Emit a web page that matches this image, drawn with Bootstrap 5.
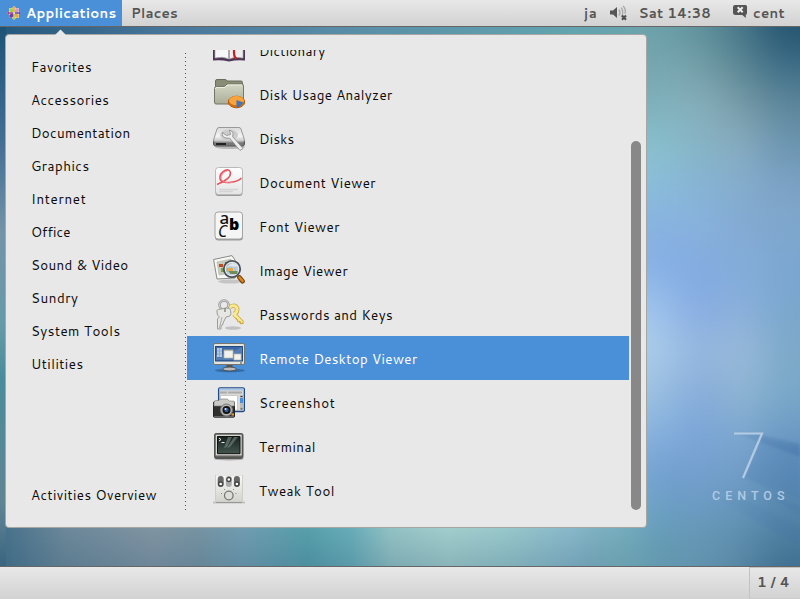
<!DOCTYPE html>
<html lang="en">
<head>
<meta charset="utf-8">
<meta name="viewport" content="width=device-width, initial-scale=1">
<title>Desktop</title>
<link href="https://cdn.jsdelivr.net/npm/bootstrap@5.3.0/dist/css/bootstrap.min.css" rel="stylesheet">
<style>
body{width:800px;height:599px;overflow:hidden;font-family:Cantarell,"Noto Sans","Open Sans",sans-serif;font-size:13.4px;line-height:20px;color:#0c0c0c;background:#5b8ba8}
.wallpaper{position:absolute;left:0;top:0;z-index:-1}
.panel{background:linear-gradient(#e8e8e8,#d2d2d2);color:#555;font-weight:700;flex:none}
.panel-top{height:27px;border-bottom:1px solid #666}
.panel-bottom{height:33px;border-top:1px solid #666}
.app-button{width:122px;height:26px;background:#4a90d9;color:#fff;padding-left:7px}
.app-button svg{margin-right:5px}
.places{padding-left:9px}
.tray{padding-right:15px}
.desk{padding:7px 0 0 5px}
.menu-box{position:relative;width:642px;height:494px;background:#e8e8e8;border:1px solid #a6a6a2;border-radius:4px;padding:15px 5px 15px 0}
.pointer{position:absolute;left:47px;top:-7px}
.categories{width:179px;padding:1px 0 0 25px}
.categories .entry{height:33px;line-height:31px;white-space:nowrap}
.dots{width:1px;margin:3px 1px 1px 0;background:repeating-linear-gradient(#505050 0 1px,transparent 1px 4px)}
.apps{width:442px;overflow:hidden}
.app-row{height:44px;flex:none;padding-left:26px;white-space:nowrap;line-height:46px}
.app-row svg{margin:2px 14px 0 0;flex:none}
.app-row.chosen{background:#4a90d9;color:#fff}
.app-label{display:block;height:44px}
.thumb-track{width:10px;margin:91px 0 2px 2px;border-radius:5px;background:#888}
.brand{position:absolute;left:711px;top:420px}
.workspace{width:51px;height:32px;border:1px solid #c2c2c2;border-right:0;border-bottom-color:#ccc;padding-left:7px;line-height:28px}
</style>
</head>
<body class="d-flex flex-column">
<svg class="wallpaper" width="800" height="599">
<defs>
<linearGradient id="wt"><stop offset="0" stop-color="#24587c"/><stop offset=".2" stop-color="#47759a"/><stop offset=".45" stop-color="#5a8fa8"/><stop offset=".72" stop-color="#62a4af"/><stop offset="1" stop-color="#6ca1ab"/></linearGradient>
<linearGradient id="wl" x2="0" y2="1"><stop offset="0" stop-color="#1d5277"/><stop offset=".05" stop-color="#255a7e"/><stop offset=".22" stop-color="#456f95"/><stop offset=".38" stop-color="#7493a8"/><stop offset=".55" stop-color="#669ba9"/><stop offset=".65" stop-color="#4a8c9c"/><stop offset=".88" stop-color="#608493"/><stop offset="1" stop-color="#3e6984"/></linearGradient>
<linearGradient id="wb" gradientUnits="userSpaceOnUse" x1="0" x2="640" y1="0" y2="0"><stop offset="0" stop-color="#44708a"/><stop offset=".1" stop-color="#6b8799"/><stop offset=".24" stop-color="#8094a2"/><stop offset=".31" stop-color="#7693a2"/><stop offset=".38" stop-color="#709cb0"/><stop offset=".48" stop-color="#569eaa"/><stop offset=".55" stop-color="#68acb8"/><stop offset=".61" stop-color="#92c1c3"/><stop offset=".7" stop-color="#a2cdcc"/><stop offset=".79" stop-color="#98c7cb"/><stop offset=".89" stop-color="#88b8c9"/><stop offset="1" stop-color="#71a8b8"/></linearGradient>
<linearGradient id="shade" x2="0" y2="1"><stop offset="0" stop-color="#245070" stop-opacity="0"/><stop offset="1" stop-color="#245070" stop-opacity=".2"/></linearGradient>
<linearGradient id="ray"><stop offset="0" stop-color="#3f6fa5" stop-opacity=".1"/><stop offset="1" stop-color="#3f6fa5" stop-opacity=".45"/></linearGradient>
<filter id="soft" x="-10%" y="-10%" width="120%" height="120%" color-interpolation-filters="sRGB"><feGaussianBlur stdDeviation="21"/></filter>
<filter id="soft1"><feGaussianBlur stdDeviation="1.5"/></filter>
<linearGradient id="fade" gradientUnits="userSpaceOnUse" x1="580" x2="645" y1="0" y2="0"><stop offset="0" stop-color="#000"/><stop offset="1" stop-color="#fff"/></linearGradient>
<mask id="rightside" maskUnits="userSpaceOnUse" x="0" y="0" width="800" height="599"><rect x="580" width="220" height="599" fill="url(#fade)"/></mask>
</defs>
<rect width="800" height="40" fill="url(#wt)"/>
<rect y="500" width="660" height="99" fill="url(#wb)"/>
<rect y="27" width="6" height="540" fill="url(#wl)"/>
<rect y="528" width="660" height="39" fill="url(#shade)"/>
<g mask="url(#rightside)"><g id="mesh" filter="url(#soft)"></g></g>
<path d="M735 433L762 435L800 444V457L762 443Z" fill="url(#ray)" filter="url(#soft1)"/>
<path d="M762 438L800 450V500L744 478Z" fill="#4776ad" opacity=".2" filter="url(#soft1)"/>
<path d="M720 500L745 499L800 528V546ZM765 492L800 506V516Z" fill="url(#ray)" opacity=".4" filter="url(#soft1)"/>
</svg>

<nav class="panel panel-top d-flex align-items-center justify-content-between">
<div class="d-flex align-items-center">
<div class="app-button d-flex align-items-center">
<svg width="14" height="14" viewBox="0 0 14 14"><path d="M7 0l2 2h3v3l2 2-2 2v3H9l-2 2-2-2H2V9L0 7l2-2V2h3z" fill="#e9e2ef"/><path d="M2.3 2.3h3.2L6.5 4v2.5H4L2.3 5z" fill="#a8cf4a"/><path d="M8 4l1-1.7h2.8v3L10 6.5H7.6z" fill="#d79ac0"/><path d="M7.6 7.6H10L11.7 9v2.8H9L7.6 10z" fill="#f2a83a"/><path d="M2.3 9L4 7.6h2.5V10L5 11.8H2.3z" fill="#7a3f96"/><path d="M7 0l2 2.300H7.700v4H6.300v-4H5z" fill="#e8a643"/><path d="M14 7l-2 2V7.700H8V6.300h4V5z" fill="#654b9c"/><path d="M7 14l-2-2h1.300V8h1.400v4H9z" fill="#a1c84c"/><path d="M0 7l2-2v1.300h4v1.400H2V9z" fill="#a3458c"/></svg>
<span data-fit="89.5">Applications</span></div>
<div class="places"><span data-fit="46">Places</span></div>
</div>
<div class="tray d-flex align-items-center">
<span data-fit="12.500" style="margin-right:12px">ja</span>
<svg width="19" height="17" viewBox="0 0 19 17" style="margin-right:10px"><path d="M0 5.400h3L7 2v11L3 9.600H0z" fill="#555"/><g fill="none" stroke="#aaa" stroke-width="1.400"><path d="M9 4.500q2 3 0 6"/><path d="M11.300 2.700q3 4.800 0 9.500"/><path d="M13.200 .8q3 4 1.800 8"/></g><path d="M12 10.500l4 4.300M16 10.500l-4 4.300" stroke="#4d4d4d" stroke-width="2"/></svg>
<span data-fit="71.500" style="margin-right:22px">Sat 14:38</span>
<svg width="15" height="15" viewBox="0 0 15 15" style="margin-right:5px;margin-top:-3px"><path d="M2 1h10.500Q14 1 14 2.500V9q0 1.500-1.200 1.700V14L9.300 11H2.500Q0 11 0 9V3Q0 1 2 1z" fill="#555"/><path d="M4.700 3.200l5 5M9.700 3.200l-5 5" stroke="#eee" stroke-width="2"/></svg>
<span data-fit="31">cent</span>
</div>
</nav>

<main class="desk flex-grow-1">
<div class="menu-box d-flex">
<svg class="pointer" width="15" height="8"><path d="M1 8L7.500 1.500L14 8z" fill="#e8e8e8"/></svg>
<div class="categories d-flex flex-column">
<div class="entry"><span data-fit="60">Favorites</span></div>
<div class="entry"><span data-fit="77.500">Accessories</span></div>
<div class="entry"><span data-fit="98.500">Documentation</span></div>
<div class="entry"><span data-fit="57.500">Graphics</span></div>
<div class="entry"><span data-fit="54.500">Internet</span></div>
<div class="entry"><span data-fit="38.500">Office</span></div>
<div class="entry"><span data-fit="96.500">Sound &amp; Video</span></div>
<div class="entry"><span data-fit="46.500">Sundry</span></div>
<div class="entry"><span data-fit="88.500">System Tools</span></div>
<div class="entry"><span data-fit="51.500">Utilities</span></div>
<div class="entry mt-auto"><span data-fit="125">Activities Overview</span></div>
</div>
<div class="dots"></div>
<div class="apps d-flex flex-column justify-content-end">

<div class="app-row d-flex align-items-center">
<svg width="32" height="32" viewBox="0 0 32 32"><path d="M0 7h32v18.500q-8-1-16 1-8-2-16-1z" fill="#4c3555"/><path d="M2 5q8-3 14 1v18q-6-3-14-1z" fill="#f7f7f7" stroke="#aaa" stroke-width=".7"/><path d="M30 5q-8-3-14 1v18q6-3 14-1z" fill="#eee" stroke="#aaa" stroke-width=".7"/><path d="M15 6v18h2V6z" fill="#aaa"/><path d="M21 5v13q0 4 2.500 6" stroke="#c8202b" stroke-width="2.200" fill="none"/></svg>
<span class="app-label" data-fit="65.500">Dictionary</span></div>

<div class="app-row d-flex align-items-center">
<svg width="32" height="32" viewBox="0 0 32 32"><defs><linearGradient id="fo" x2="0" y2="1"><stop stop-color="#d5d7c5"/><stop offset="1" stop-color="#a9ad98"/></linearGradient></defs><path d="M2.500 24V2q0-1.500 1.500-1.500h8Q13.500.5 14 2h14q1.500 0 1.500 1.500V10h-27z" fill="#898d76" stroke="#6a6d5d"/><path d="M1.500 9.500q0-2 2-2h8l2.500-2.500h15q1.500 0 1.500 2V23q0 2-2 2H3q-1.500 0-1.500-2z" fill="url(#fo)" stroke="#747766"/><path d="M2.500 10q0-1.500 1.500-1.500h8l2.500-2.500H29" stroke="#eceee0" fill="none"/><ellipse cx="23.500" cy="23" rx="8.200" ry="5.800" fill="#d66c08" stroke="#b85805"/><ellipse cx="23.500" cy="21.700" rx="7.500" ry="4.600" fill="#faa33a"/><path d="M23.500 21l7 2.500-4 4.500-3 .3z" fill="#4773b4"/></svg>
<span class="app-label" data-fit="132.500">Disk Usage Analyzer</span></div>

<div class="app-row d-flex align-items-center">
<svg width="32" height="32" viewBox="0 0 32 32"><defs><linearGradient id="dk" x2="0" y2="1"><stop stop-color="#d9d9d9"/><stop offset=".6" stop-color="#f4f4f4"/><stop offset="1" stop-color="#bbb"/></linearGradient></defs><ellipse cx="17" cy="24" rx="15" ry="2" fill="#000" opacity=".2"/><path d="M.5 17.500h31V21q0 2-2 2h-27q-2 0-2-2z" fill="#777" stroke="#555"/><path d="M6 4.500h20q1.500 0 2 1.500l3.500 11q0 2-2 2h-27q-2 0-2-2L4 6q.5-1.500 2-1.500z" fill="url(#dk)" stroke="#999"/><path d="M3 21h10" stroke="#222" stroke-width="2"/><ellipse cx="16" cy="12" rx="9" ry="5.500" fill="#ccc"/><path d="M9.500 9.500q-1 4.500 3.500 5.500 2 .4 3.500 0L27 27.500l3-2L19.500 13.500q2-5-3-6.500l1 4.500-4 1z" fill="#eee" stroke="#888" stroke-width=".8"/></svg>
<span class="app-label" data-fit="34.500">Disks</span></div>

<div class="app-row d-flex align-items-center">
<svg width="32" height="32" viewBox="0 0 32 32"><defs><linearGradient id="pg" x2="0" y2="1"><stop stop-color="#fff"/><stop offset="1" stop-color="#e4e4e4"/></linearGradient></defs><rect x="2.500" y="2" width="27" height="27" rx="3" fill="#999"/><rect x="2.500" y=".5" width="27" height="27" rx="3" fill="url(#pg)" stroke="#b9b9b9"/><path d="M4 17.500Q18 12 17.500 6 16.500 1.500 12 3.500 6.500 6.500 7 11.500 7.500 16 16 15.500T28.500 11" fill="none" stroke="#e6505a" stroke-width="1.600"/><path d="M14 4q-6 2-6 8 3 5 12 3.500" fill="none" stroke="#f38a8f" stroke-width=".9"/><path d="M6 22.500h19M6 24.500h14" stroke="#d4d4d4" stroke-width="1.300"/></svg>
<span class="app-label" data-fit="116">Document Viewer</span></div>

<div class="app-row d-flex align-items-center">
<svg width="32" height="32" viewBox="0 0 32 32"><rect x="2" y="2" width="28" height="27.500" rx="3.500" fill="#999"/><rect x="2" y="1" width="27.500" height="27" rx="3" fill="#f5f5f5" stroke="#a4a4a4"/><text x="6.500" y="12.500" font-family="Noto Sans, sans-serif" font-size="17" font-weight="500" fill="#111">a</text><text x="16" y="18.500" font-family="Noto Sans, sans-serif" font-size="16" font-weight="900" fill="#000">b</text><text x="5" y="25.500" font-family="Noto Sans, sans-serif" font-size="15.500" font-style="italic" fill="#111">C</text></svg>
<span class="app-label" data-fit="80">Font Viewer</span></div>

<div class="app-row d-flex align-items-center">
<svg width="32" height="32" viewBox="0 0 32 32"><ellipse cx="17" cy="26.500" rx="12" ry="2" fill="#000" opacity=".15"/><path d="M.6 4.500L19 .6 22 5v18L4 24z" fill="#f8f8f6" stroke="#898985"/><path d="M4 7l14-3 1 14-13 2z" fill="#c8ccba" stroke="#aaa" stroke-width=".5"/><path d="M6 9h4v3H6zM12 7h4v4h-4z" fill="#bb4b24"/><path d="M8 13h8v4H8z" fill="#7d9d55"/><circle cx="19" cy="14" r="8.200" fill="#b3c6d6" fill-opacity=".8" stroke="#4c5058" stroke-width="1.800"/><circle cx="19" cy="14" r="6.700" fill="none" stroke="#f0f3f5" stroke-width=".9"/><path d="M14 13h6v3h-6z" fill="#e5a94c"/><path d="M15.500 16h9v3h-7z" fill="#708c59"/><path d="M14 12q3-5 9-3l1 3-5-1z" fill="#eef4f8" opacity=".7"/><path d="M24.500 20.500l2 2" stroke="#777" stroke-width="3"/><path d="M26.500 22.500l3 3.800" stroke="#7a430e" stroke-width="4.600" stroke-linecap="round"/><path d="M26.500 22.500l3 3.500" stroke="#d9871f" stroke-width="2.600" stroke-linecap="round"/></svg>
<span class="app-label" data-fit="88">Image Viewer</span></div>

<div class="app-row d-flex align-items-center">
<svg width="32" height="32" viewBox="0 0 32 32"><ellipse cx="20" cy="29" rx="8" ry="1.800" fill="#000" opacity=".16"/><g fill="none"><circle cx="11" cy="6" r="4.500" stroke="#999" stroke-width="2.600"/><circle cx="11" cy="6" r="4.500" stroke="#ccc" stroke-width="1.200"/><path d="M17 8q5-3 7 1 1 4-3 6M21 15l8.500 9" stroke="#cfae40" stroke-width="4.600"/><path d="M17 8q5-3 7 1 1 4-3 6M20.500 14.500l8.500 9" stroke="#f9e896" stroke-width="2.800"/></g><path d="M22 19l2 1 1 3 2-1 1 3 3-1" stroke="#cfae40" fill="none"/><path d="M4 13q-1-2 1.500-2.500L13 9q4-.5 4.500 2l.5 4q-.5 2.500-3 2.500L13 18l-2.500 5-1 3-1.500.5V30H4.500V20l2-2-2-2z" fill="#e6e6e3" stroke="#9c9c99"/><path d="M9 18L6.500 29" stroke="#aaa"/><path d="M12 9v4" stroke="#888" stroke-width="1.500"/></svg>
<span class="app-label" data-fit="133">Passwords and Keys</span></div>

<div class="app-row chosen d-flex align-items-center">
<svg width="32" height="32" viewBox="0 0 32 32"><ellipse cx="17" cy="27.500" rx="15" ry="1.800" fill="#1c3e64" opacity=".45"/><path d="M14 20h5l1 5h-7z" fill="#555"/><ellipse cx="16.500" cy="26" rx="7" ry="1.900" fill="#bbb" stroke="#444" stroke-width=".8"/><rect x=".5" y=".5" width="31" height="21" rx="1.500" fill="#e4e4de" stroke="#75756e"/><rect x="2.500" y="3.500" width="27" height="14.500" fill="#3c69a5" stroke="#234a82"/><path d="M3 12Q14 12 29 4v13H3z" fill="#6b91c2" opacity=".5"/><rect x="4" y="5" width="5" height="9" fill="#b7c9de"/><path d="M4 8h5M4 11h5M6.500 5v9" stroke="#7899c0" stroke-width=".6"/><rect x="11" y="7" width="9" height="8" fill="#f3f3ee" stroke="#b7b7ad" stroke-width=".7"/><path d="M11 7.600h9M21 11.600h7" stroke="#b8b8aa"/><rect x="21" y="11" width="7" height="6" fill="#f3f3ee" stroke="#b7b7ad" stroke-width=".7"/><path d="M27 20h2" stroke="#444"/></svg>
<span class="app-label" data-fit="157.500">Remote Desktop Viewer</span></div>

<div class="app-row d-flex align-items-center">
<svg width="32" height="32" viewBox="0 0 32 32"><rect x="5.600" y=".8" width="25.800" height="23.700" rx="1.500" fill="#d8d9d4" stroke="#204a87" stroke-width="1.300"/><path d="M6.500 2.500h24" stroke="#a9c4e4" stroke-width="2"/><path d="M7 5.500h7M15 5.500h14" stroke="#aaa" stroke-width="2"/><path d="M7.500 8.500h17V23h-17z" fill="#fff" stroke="#bbb" stroke-width=".7"/><path d="M28.500 8v14" stroke="#bbb" stroke-width="3"/><path d="M28.500 11v5" stroke="#4a90d9" stroke-width="3"/><path d="M27.500 9.500h2M27.500 22h2" stroke="#333"/><rect x=".5" y="14.500" width="21" height="16" rx="1.500" fill="#30312f" stroke="#222"/><path d="M1 15.500q0-2 2-2h3l1.500-1.500h7l1.500 2h4q1.500 0 1.500 2v3H1z" fill="#c9cac5" stroke="#777" stroke-width=".6"/><circle cx="13.500" cy="23" r="6" fill="#b5b6b1" stroke="#777"/><circle cx="13.500" cy="23" r="4" fill="#111"/><circle cx="13.500" cy="23" r="2.200" fill="#345a98"/><circle cx="12.500" cy="22" r="1" fill="#dce9fa"/><path d="M1 30h20" stroke="#999"/><path d="M18.500 27.500h2.500" stroke="#ee9d25" stroke-width="2"/></svg>
<span class="app-label" data-fit="75.500">Screenshot</span></div>

<div class="app-row d-flex align-items-center">
<svg width="32" height="32" viewBox="0 0 32 32"><defs><linearGradient id="tm" x2="0" y2="1"><stop stop-color="#182120"/><stop offset="1" stop-color="#43564f"/></linearGradient></defs><ellipse cx="16" cy="28" rx="15" ry="1.500" opacity=".25"/><path d="M1.500 4q0-1.500 1.500-1.500h25.500Q30 2.500 30 4v21.500q0 2-1.500 2H3q-1.500 0-1.500-2z" fill="#555852" stroke="#555"/><path d="M2.700 3.700h26v21h-26z" fill="#d7d9d3"/><path d="M4.500 5.500h22.500v17.200H4.500z" fill="url(#tm)" stroke="#111"/><path d="M15 6l4 0-5 10-3 1zM21 6h4l-8 10-3 1z" fill="#70847a" opacity=".65"/><path d="M6 7l2 1.500L6 10M8.500 11.500h3" fill="none" stroke="#eee"/><path d="M3 24.800h26" stroke="#888"/></svg>
<span class="app-label" data-fit="56">Terminal</span></div>

<div class="app-row d-flex align-items-center">
<svg width="32" height="32" viewBox="0 0 32 32"><defs><linearGradient id="tw" x2="0" y2="1"><stop stop-color="#fafaf9"/><stop offset="1" stop-color="#d2d3cc"/></linearGradient></defs><path d="M0 26.500h32v2H0z" fill="#000" opacity=".16"/><path d="M2.500 0h27v27h-27z" fill="url(#tw)" stroke="#c8c9c2" stroke-width=".8"/><path d="M3 27.500h26" stroke="#999"/><g fill="#686868"><rect x="4.700" y="1" width="6" height="11" rx="3"/><rect x="12.800" y="1" width="6" height="11" rx="3" fill="#aaa"/><rect x="20.900" y="1" width="6" height="11" rx="3"/></g><g fill="#fff" stroke="#444" stroke-width="1.300"><circle cx="7.700" cy="9" r="2"/><circle cx="15.800" cy="4.500" r="2"/><circle cx="23.900" cy="9" r="2"/></g><circle cx="15.800" cy="20.500" r="4.300" fill="#deded9" stroke="#777" stroke-width="1.300"/><g fill="#888"><path d="M8 18h1v1H8zM22.500 18h1v1h-1zM11 14h1v1h-1zM20 14h1v1h-1z"/></g></svg>
<span class="app-label" data-fit="75">Tweak Tool</span></div>
</div>
<div class="thumb-track"></div>
</div>
</main>

<svg class="brand" width="80" height="90" viewBox="0 0 80 90"><path d="M23 13.500H51L32 58" fill="none" stroke="#c0d2e8" stroke-opacity=".85" stroke-width="2.200"/><text x="1" y="80" font-family="Roboto, sans-serif" font-size="12.500" font-weight="500" fill="#b0cae2" textLength="72.500">CENTOS</text></svg>

<footer class="panel panel-bottom d-flex justify-content-end">
<div class="workspace"><span data-fit="32">1 / 4</span></div>
</footer>
<script src="https://cdn.jsdelivr.net/npm/bootstrap@5.3.0/dist/js/bootstrap.bundle.min.js"></script>
<script>
// Wallpaper colours: one row per 40px, columns centred at 610, 660, 700, 740, 785
var rows = [
"66a5ae 6ca0a9 5f929b 44728a 1e4d6c","6ca5ae 6ca0a9 5f929b 4a778a 24546f","70a8b0 7aa8b0 78a2ab 5d8894 40708a","78b0b8 80b3bf 8ab0be 7d9eaa 60889c",
"8cc6d0 8ac2cf 84b3c5 8aafc4 6b96b3","8cc0dc 8abbdc 87b3d6 84acce 7ea3c6","88b8e2 86b0e0 8ab2de 83aad2 7fa8ce",
"90b8e8 86b0e6 80a9e0 85aedb 7aa5d0","b0d0ec 9cc2ec 86aae2 8cb1dc 7aa7cd","bcd6ea a8caea 93b5dd 9cbcdb 7da8c8",
"a8c8e2 9cc0e0 85abdb 93b7d3 7aa9c9","98c0e2 86b2de 7ba4d8 80abd0 6c9ac4","80b0d6 739fd2 749fd0 749fca 5b8bb8",
"80b8c4 6a9fc4 6a9ac0 6696bb 5485aa","72a9b5 6399b0 6596b0 5c8ba8 477797","6fa5b0 6095ac 6092ac 4f80a0 366588"];
var xs = [540, 635, 680, 720, 762, 880], out = "";
rows.forEach(function (r, j) {
  r.split(" ").forEach(function (c, i) {
    out += '<rect x="' + xs[i] + '" y="' + (j * 40 - 30) + '" width="' + (xs[i + 1] - xs[i] + 1) + '" height="41" fill="#' + c + '"/>';
  });
});
document.getElementById("mesh").innerHTML = out;
// Spread each label's letters to its nominal width
document.querySelectorAll("[data-fit]").forEach(function (el) {
  var range = document.createRange();
  range.selectNodeContents(el);
  el.style.letterSpacing = (+el.dataset.fit + 1 - range.getBoundingClientRect().width) / el.textContent.length + "px";
});
</script>
</body>
</html>
